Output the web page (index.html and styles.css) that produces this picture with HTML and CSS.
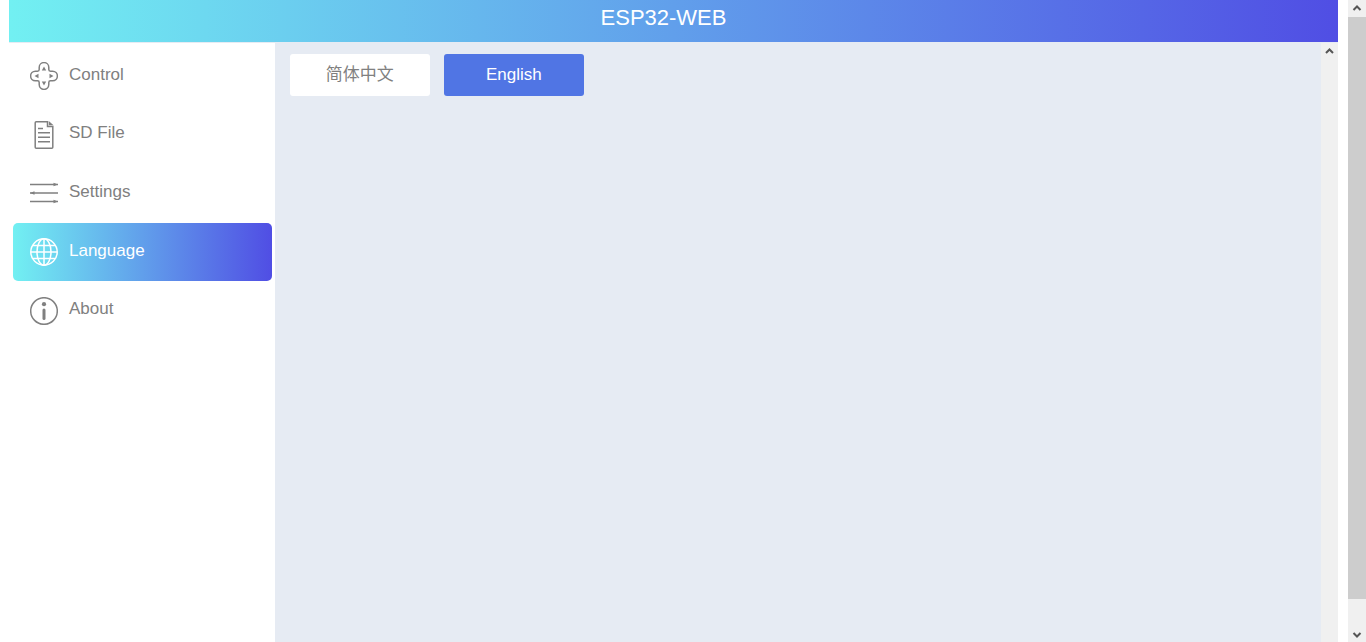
FILE: index.html
```html
<!DOCTYPE html>
<html lang="en">
<head>
    <meta charset="UTF-8">
    <meta name="viewport" content="width=device-width, initial-scale=1.0">
    <title>ESP32-WEB</title>
    <link rel="stylesheet" href="styles.css">
</head>
<body>
    <div class="app">
        <header class="header">
            <h1>ESP32-WEB</h1>
        </header>
        <div class="main">
            <nav class="sidebar">
                <ul class="menu">
                    <li><a class="menu-item" href="#control">
                        <svg class="icon" viewBox="0 0 28 28">
                            <path d="M9.2 7.5V5.4a4.8 4.8 0 0 1 9.6 0v2.1q0 1.7 1.7 1.7h2.1a4.8 4.8 0 0 1 0 9.6h-2.1q-1.7 0-1.7 1.7v2.1a4.8 4.8 0 0 1-9.6 0v-2.1q0-1.7-1.7-1.7H5.4a4.8 4.8 0 0 1 0-9.6h2.1q1.7 0 1.7-1.7z"/>
                            <path class="fill" d="M14 4.5l2.2 4h-4.4zM14 23.5l2.2-4h-4.4zM4.5 14l4-2.2v4.4zM23.5 14l-4-2.2v4.4z"/>
                        </svg>
                        <span>Control</span>
                    </a></li>
                    <li><a class="menu-item" href="#sdfile">
                        <svg class="icon" viewBox="0 0 28 28">
                            <path d="M17.5 .8H6.2q-1 0-1 1v24.4q0 1 1 1h15.6q1 0 1-1V5.5h-5.3zM8 7.5h5M8 11.8h12M8 16.2h12M8 20.8h12"/>
                            <path class="fill" d="M18.8 0l4.7 4.2h-4.7z"/>
                        </svg>
                        <span>SD File</span>
                    </a></li>
                    <li><a class="menu-item" href="#settings">
                        <svg class="icon" viewBox="0 0 28 28">
                            <path d="M0 5.5h28M0 14h28M0 22.5h28"/>
                            <path class="fill" d="M23.5 3.8l4.5 1.7-4.5 1.7zM4.5 12.3L0 14l4.5 1.7zM23.5 20.8l4.5 1.7-4.5 1.7z"/>
                        </svg>
                        <span>Settings</span>
                    </a></li>
                    <li><a class="menu-item active" href="#language">
                        <svg class="icon" viewBox="0 0 28 28">
                            <circle cx="14" cy="14" r="13.2"/>
                            <ellipse cx="14" cy="14" rx="7" ry="13.2"/>
                            <path d="M14 1v26M1 14h26M3 7.5h22M3 20.5h22"/>
                        </svg>
                        <span>Language</span>
                    </a></li>
                    <li><a class="menu-item" href="#about">
                        <svg class="icon" viewBox="0 0 28 28">
                            <circle cx="14" cy="14" r="13.3"/>
                            <circle class="fill" cx="14" cy="7.2" r="2.1"/>
                            <path class="stem" d="M14 13v8.5"/>
                        </svg>
                        <span>About</span>
                    </a></li>
                </ul>
            </nav>
            <section class="content">
                <div class="languages">
                    <button type="button" class="btn" lang="zh-CN">简体中文</button>
                    <button type="button" class="btn selected">English</button>
                </div>
            </section>
            <div class="scrollbar" aria-hidden="true">
                <svg class="arrow" viewBox="0 0 17 17"><path d="M5 10l3.5-3.5 3.5 3.5"/></svg>
            </div>
        </div>
    </div>
    <div class="scrollbar page-scroll" aria-hidden="true">
        <svg class="arrow" viewBox="0 0 17 17"><path d="M5 10l3.5-3.5 3.5 3.5"/></svg>
        <div class="thumb"></div>
        <svg class="arrow" viewBox="0 0 17 17"><path d="M5 8l3.5 3.5 3.5-3.5"/></svg>
    </div>
</body>
</html>
```

FILE: styles.css
```css
* {
    box-sizing: border-box;
}
body {
    margin: 0;
    display: flex;
    height: 100vh;
    overflow: hidden;
    background: #fff;
    color: #808080;
    font-family: "Liberation Sans", Arial, "Noto Sans CJK SC", sans-serif;
    font-size: 17px;
}
.app {
    flex: 1;
    display: flex;
    flex-direction: column;
    margin: 0 10px 0 9px;
}
.header {
    height: 43px;
    padding-right: 20px;
    border-bottom: 1px solid #e6ebf3;
    background: linear-gradient(to right, #72f0f2, #504ee4) padding-box;
    color: #fff;
    text-align: center;
}
.header h1 {
    margin: 0;
    font-size: 22px;
    font-weight: normal;
    line-height: 35px;
}
.main {
    flex: 1;
    display: flex;
}
.sidebar {
    width: 20%;
    padding: 4px 3px 0 4px;
}
.menu {
    display: grid;
    grid-template-rows: repeat(5, 1fr);
    height: 293px;
    margin: 0;
    padding: 0;
    list-style: none;
}
.menu-item {
    display: flex;
    align-items: center;
    gap: 11px;
    height: 100%;
    padding-left: 17px;
    border-radius: 5px;
    color: #808080;
    text-decoration: none;
}
.menu-item span {
    padding-bottom: 3px;
}
.menu-item.active {
    background: linear-gradient(to right, #72f0f2, #504ee4);
    color: #fff;
}
.icon {
    width: 28px;
    height: 28px;
    fill: none;
    stroke: currentColor;
    stroke-width: 1.5;
}
.icon .fill {
    fill: currentColor;
    stroke: none;
}
.icon .stem {
    stroke-width: 3;
    stroke-linecap: round;
}
.content {
    flex: 1;
    padding: 11px 15px;
    background: #e6ebf3;
}
.languages {
    display: flex;
    gap: 14px;
}
.btn {
    width: 140px;
    height: 42px;
    padding: 0;
    border: none;
    border-radius: 3px;
    background: #fff;
    color: #808080;
    font: inherit;
}
.btn:lang(zh) {
    padding-bottom: 6px;
}
.btn.selected {
    background: #5075e4;
    color: #fff;
}
.scrollbar {
    display: flex;
    flex-direction: column;
    width: 17px;
    background: #f0f0f0;
}
.page-scroll {
    width: 18px;
}
.arrow {
    height: 17px;
    fill: none;
    stroke: #555;
    stroke-width: 2;
}
.thumb {
    flex: 1;
    margin-bottom: 26px;
    background: #cdcdcd;
}
```
